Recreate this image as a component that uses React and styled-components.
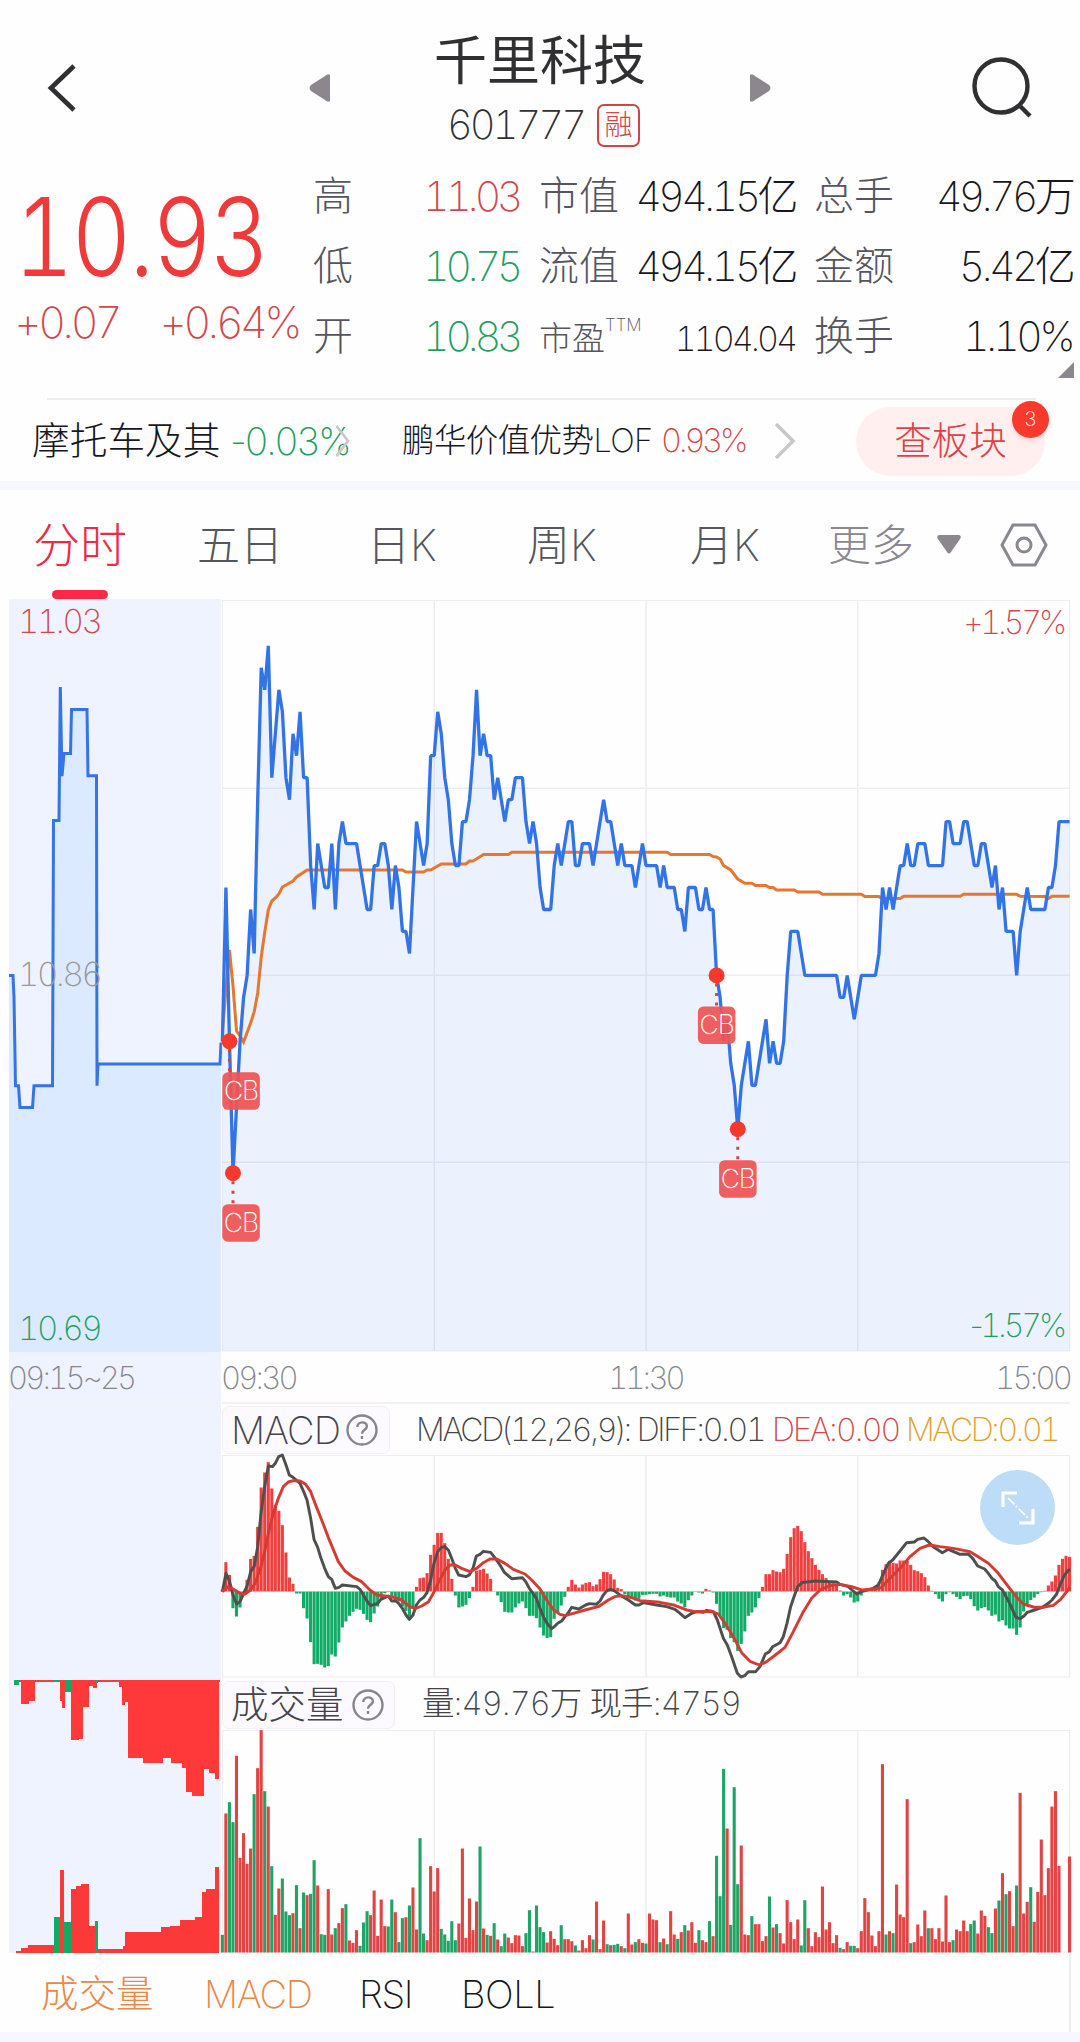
import React from "react";
import styled, { createGlobalStyle } from "styled-components";

const RED = "#d0484a";
const GREEN = "#1f9f63";
const BAR_RED = "#f03f3f";
const BAR_GREEN = "#12ab66";

const Global = createGlobalStyle`
  * { box-sizing: border-box; }
  body { margin: 0; background: #fefefe; }
`;

/* ---------- data ---------- */
const STEP = 3.53;
const px = (i) => 0.4 + i * STEP;

const levels = [
  -3, 4, -3, -9, -6, -3, -1, 0, 3, 1, 8, 14, 13, 15, 9, 11, 13, 12, 9, 8, 11, 10, 12, 9, 9, 5, 3, 6, 5, 4,
  4, 6, 3, 6, 7, 6, 6, 6, 6, 5, 4, 3, 3, 5, 5, 6, 6, 5, 3, 5, 4, 2, 2, 1, 4, 7, 6, 5, 6, 10,
  10, 12, 11, 9, 8, 6, 5, 5, 7, 7, 8, 10, 13, 10, 11, 10, 10, 8, 9, 8, 7, 8, 8, 9, 9, 9, 7, 6, 7, 6,
  4, 3, 3, 3, 5, 6, 5, 6, 7, 7, 5, 5, 6, 6, 6, 5, 6, 7, 8, 7, 7, 6, 5, 6, 5, 5, 5, 4, 5, 6,
  5, 5, 5, 5, 4, 5, 4, 4, 4, 3, 3, 2, 4, 4, 4, 3, 3, 4, 3, 3, 0, -1, -3, -2, -4, -5, -7, -5, -4, -3,
  -5, -5, -4, -3, -2, -4, -3, -4, -4, -3, 0, 2, 2, 2, 1, 0, 0, 0, 0, 0, 0, 0, 0, 0, 0, -1, -1, 0, -1, -2,
  -1, 0, 0, 0, 0, 0, 1, 4, 3, 4, 3, 4, 5, 5, 6, 5, 5, 6, 6, 6, 5, 5, 5, 5, 5, 7, 7, 6, 6, 6,
  7, 7, 6, 5, 5, 6, 6, 5, 4, 5, 3, 4, 2, 2, 2, 0, 2, 3, 4, 3, 3, 3, 3, 3, 4, 4, 5, 7, 7, 7, 7,
];
const levelY = (l) => 376.4 - l * 21.97;

const average = [
  [0, 431], [2, 350], [3, 386], [4, 431], [5, 436], [6, 442], [8, 423], [9, 412], [10, 393], [11, 357], [12, 332],
  [13, 310], [14, 301], [15, 298], [16, 294], [17, 287], [20, 281], [21, 277], [24, 270], [51, 270], [52, 272],
  [57, 272], [58, 270], [59, 270], [62, 264], [69, 264], [70, 261], [71, 261], [74, 254.5], [81, 254.5], [82, 252.3],
  [126, 252.3], [127, 254.5], [138, 254.5], [139, 256.5], [140, 257], [141, 259], [142, 265.6], [144, 270],
  [146, 279], [148, 283.3], [150, 283.3], [151, 285.6], [154, 285.6], [155, 287.6], [156, 287.6], [157, 290],
  [162, 290], [163, 292], [169, 292], [170, 294.3], [181, 294.3], [182, 296.6], [186, 296.6], [187, 298.6],
  [192, 298.6], [193, 296.3], [209, 296.3], [210, 294.3], [225, 294.3], [226, 296.3], [233, 296.6], [234, 298.6],
  [235, 296.3], [240, 296.3],
];

const auctionLine =
  "0,376.5 4,376.5 5,398 6.5,486.7 9.5,486.7 11,508.5 23.5,508.5 25,486.7 43.5,486.7 44.5,221.500 50,221.500 51.3,88 53,177 55,154.600 61.5,154.600 62.5,110.600 78,110.600 79,176.700 87.5,176.700 88,486.700 89,465 211,465 212,443.500";

const macdBars = [
  5, 88, 50, -50, -75, -48, -10, 35, 98, 107, 194, 312, 357, 388, 309, 260, 242, 199, 117, 42, 23, -6, -6, -50, -81,
  -152, -218, -217, -220, -228, -224, -189, -195, -153, -108, -90, -73, -61, -52, -55, -67, -85, -92, -66, -45, -22,
  -5, -2, -17, -25, -30, -45, -58, -76, -50, 14, 40, 42, 55, 110, 140, 176, 176, 145, 98, 38, -12, -48, -45, -40,
  -20, 14, 62, 65, 68, 54, 38, 0, -12, -32, -61, -63, -63, -48, -36, -30, -50, -73, -73, -80, -108, -132, -140, -137,
  -82, -62, -42, -16, 14, 35, 21, 12, 21, 26, 28, 16, 21, 37, 59, 58, 52, 36, 11, 7, -8, -16, -22, -27, -22, -10,
  -10, -8, -7, -7, -15, -12, -16, -18, -18, -30, -36, -47, -26, -12, -1, -3, -6, 8, 3, -3, -37, -75, -110, -115,
  -140, -152, -178, -157, -120, -73, -63, -48, -20, 14, 52, 52, 64, 60, 58, 68, 113, 163, 190, 197, 181, 148, 121,
  100, 80, 65, 52, 40, 30, 25, 20, 3, -12, -8, -18, -33, -30, -12, -2, 2, 5, 8, 28, 65, 82, 92, 86, 84, 93, 93, 92,
  80, 64, 61, 55, 43, 18, 2, -8, -22, -30, -8, -2, -8, -16, -23, -14, -13, -23, -44, -57, -50, -47, -57, -73, -69,
  -90, -86, -102, -111, -111, -130, -108, -60, -38, -26, -18, -8, -2, 2, 18, 30, 48, 80, 98, 107, 104,
];

const diffLine =
  "22,605 33,550 44,575 54,615 65,642 75,635 86,610 96,588 107,545 118,528 128,470 138,370 149,290 160,228 172,230 181,220 191,200 202,195 213,225 223,255 234,262 255,280 266,305 276,330 287,385 297,448 308,472 318,505 329,535 340,560 350,568 361,595 372,592 382,585 425,590 435,598 445,615 456,633 467,647 488,640 498,628 520,618 530,633 541,632 551,640 562,655 573,675 583,688 594,675 604,645 615,630 626,622 636,608 647,570 657,520 668,485 679,472 689,470 700,480 710,505 721,535 731,555 753,560 763,555 774,535 784,498 795,493 805,484 827,487 837,500 848,515 858,530 869,548 890,566 922,563 932,575 943,595 954,610 964,625 975,655 985,680 996,700 1010,716 1017,711 1028,700 1040,693 1050,680 1060,668 1070,652 1091,657 1112,645 1123,641 1144,643 1155,633 1165,615 1176,602 1187,598 1197,602 1218,617 1240,630 1261,645 1272,645 1285,638 1325,645 1355,650 1380,658 1395,670 1410,683 1430,670 1445,665 1465,667 1475,661 1495,665 1507,690 1525,745 1537,765 1550,800 1567,850 1578,861 1589,857 1600,845 1622,845 1635,830 1651,792 1663,785 1673,770 1695,758 1705,740 1716,700 1727,650 1737,620 1748,590 1761,578 1801,573 1865,576 1875,583 1900,590 1911,600 1925,612 1939,605 1955,600 1975,595 1990,585 2002,558 2020,520 2033,510 2055,483 2075,458 2098,456 2108,448 2127,444 2140,455 2155,470 2182,488 2200,478 2235,493 2260,492 2275,508 2288,528 2309,537 2320,550 2331,565 2341,573 2350,590 2362,600 2384,640 2403,682 2415,686 2427,678 2437,667 2458,660 2480,653 2500,640 2511,630 2525,612 2535,585 2547,558 2560,540 2566,540";
const deaLine =
  "22,605 40,590 54,597 75,610 90,612 107,600 120,580 138,530 149,485 160,430 175,370 190,325 205,290 220,276 235,272 255,273 272,283 287,305 300,340 320,390 345,455 370,515 390,543 415,562 440,575 465,600 485,615 510,618 540,623 560,630 585,650 600,656 620,648 640,636 655,610 670,578 690,540 705,525 718,524 740,535 765,545 785,535 805,518 825,507 845,507 870,520 895,538 930,552 950,570 975,597 995,630 1015,658 1035,673 1050,677 1075,670 1110,660 1150,650 1180,630 1200,620 1220,617 1250,623 1275,632 1335,637 1375,645 1415,660 1440,665 1490,664 1510,672 1530,700 1555,740 1580,788 1605,814 1633,825 1655,815 1685,792 1710,772 1735,725 1765,665 1790,625 1815,600 1845,587 1875,583 1910,590 1940,600 1975,598 2000,592 2020,570 2055,535 2085,500 2115,475 2143,465 2175,470 2215,475 2265,485 2285,497 2320,520 2350,550 2380,590 2405,622 2425,642 2455,651 2485,652 2515,646 2537,628 2565,592";

const volumes = [
  -53, 417, -451, -391, 590, 284, 358, 266, 312, -475, 553, 667, -484, 438, -259, 113, 192, -222, -123, -112, 118,
  -202, 73, -180, 172, -176, -277, 201, -55, -53, 190, 54, -73, 88, 133, -145, 36, 29, 67, -20, -90, -124, 112, 186,
  50, 159, 79, -78, -159, 121, -31, -103, 106, -141, 195, 69, -343, -57, 37, 259, 183, 253, -71, -54, -35, -94, -37,
  87, 312, 44, 162, 67, 153, -318, 72, -53, 50, -88, 39, -19, -57, 45, 28, 52, 51, 19, -58, -127, 3, -141, -76, -61,
  30, 64, 41, 22, -82, 40, 40, 34, -21, 6, 37, 13, 52, -39, 153, 10, 96, -25, 22, -23, -26, 19, -13, 117, 24, -31,
  40, 29, -27, 117, 99, 97, -31, 42, -25, 124, 54, -41, 61, -82, 66, 91, 29, -67, 37, 31, -94, 49, -290, -169, -551,
  372, -83, -496, -205, 321, 54, 52, -109, 85, 85, 34, 49, -168, 75, -85, 58, 27, 157, 91, 40, 99, -21, -157, 73, 19,
  61, 46, 198, 69, 91, 28, 52, -14, 10, 31, -20, -20, 13, 64, 163, 121, 51, 19, 64, 565, -54, 64, -58, 204, 114, 106,
  460, -28, 31, 84, 49, 126, -73, 73, 40, 73, 33, 171, 31, -37, 69, 64, 96, 64, -85, -96, 57, 126, 110, -76, -58,
  132, -156, 238, -175, 184, 79, -201, 479, 117, 152, -196, 92, 182, 339, 172, 253, 438, 484, 260, 0, 0, 288,
];

/* [start, end, size, isGreen] in thirds of a pixel */
const unmatched = [
  [42, 56, 15, 1], [63, 87, 73], [87, 105, 64], [160, 193, 6, 1], [180, 186, 64], [186, 195, 84], [195, 213, 37, 1],
  [213, 236, 181], [236, 248, 176], [248, 266, 80], [266, 278, 18], [278, 291, 25], [284, 294, 9, 1], [358, 366, 20],
  [366, 375, 75], [375, 383, 66], [383, 428, 235], [428, 488, 248], [488, 514, 235], [514, 547, 248],
  [547, 558, 265], [558, 575, 335], [575, 611, 349], [611, 627, 268], [627, 645, 280], [645, 657, 298],
];
const matched = [
  [48, 62, 6], [62, 84, 15], [84, 162, 25], [162, 180, 107, 1], [180, 192, 248], [192, 213, 92, 1], [213, 228, 193],
  [228, 242, 200], [242, 266, 208], [266, 285, 82], [285, 294, 97, 1], [294, 368, 13], [368, 375, 22],
  [375, 482, 62], [482, 510, 77], [510, 539, 81], [539, 585, 99], [585, 606, 107], [606, 618, 183], [618, 646, 192],
  [646, 657, 257],
];

/* ---------- parts ---------- */
const Page = styled.div`
  width: 1080px;
  height: 2042px;
  overflow: hidden;
  background: #fefefe;
  color: #17171d;
  font-family: Inter, "Noto Sans CJK SC", sans-serif;
  font-weight: 200;
  line-height: 1;
  white-space: nowrap;
`;
/* digits keep equal widths while the punctuation between them stays narrow */
const Digits = styled.span`
  font-variant-numeric: tabular-nums;
`;
const Figures = ({ children }) =>
  children.split(/(\d+)/).map((part, i) => (i % 2 ? <Digits key={i}>{part}</Digits> : part));

const Text = styled.span`
  flex: none;
  width: ${(p) => (p.$width ? `${p.$width}px` : "auto")};
  font-size: ${(p) => p.$size}px;
  letter-spacing: ${(p) => p.$track || 0}px;
  color: ${(p) => p.$color || "inherit"};
`;

const Header = styled.header`
  height: 161px;
  display: grid;
  grid-template-columns: 309px 1fr 309px;
  align-items: center;
  padding: 14px 0 0;
`;
const HeaderSide = styled.div`
  height: 148px;
  display: flex;
  justify-content: space-between;
  align-items: center;
  padding: ${(p) => (p.$right ? "0 47px 0 0" : "0 0 0 46px")};
`;
const Title = styled.div`
  display: flex;
  flex-direction: column;
  align-items: center;
  padding-top: 5px;
`;
const Name = styled.h1`
  margin: 0;
  font-size: 53px;
  line-height: 53px;
  font-weight: 400;
  color: #303033;
`;
const CodeRow = styled.div`
  display: flex;
  align-items: center;
  gap: 13px;
  margin-top: 16px;
  padding-left: 7px;
  color: #303033;
`;
const MarginTag = styled.span`
  width: 43px;
  height: 43px;
  display: flex;
  align-items: center;
  justify-content: center;
  border: 2.5px solid #d04648;
  border-radius: 7px;
  color: #d04648;
  font-size: 28px;
`;

const Quote = styled.section`
  height: 237px;
  display: flex;
`;
const PriceBlock = styled.div`
  width: 313px;
  padding: 21px 0 0 14px;
`;
const Price = styled.div`
  width: 300px;
  font-size: 108px;
  line-height: 110px;
  letter-spacing: -3px;
  font-weight: 300;
  color: #f03a3a;
  transform: scaleX(0.858);
  transform-origin: left;
`;
const Change = styled.div`
  display: flex;
  justify-content: space-between;
  width: 285px;
  margin-top: 8px;
  font-size: 43px;
  line-height: 44px;
  letter-spacing: -3.6px;
  color: ${RED};
`;
const StatColumn = styled.div`
  width: ${(p) => p.$width}px;
  margin-right: ${(p) => p.$gap || 0}px;
`;
const Stat = styled.div`
  height: 70px;
  padding-top: ${(p) => (p.$small ? 5 : 0)}px;
  display: flex;
  align-items: center;
  justify-content: space-between;
`;
const StatLabel = styled.span`
  font-size: ${(p) => (p.$small ? 33 : 40)}px;
  color: #55555d;
`;
const Sup = styled.sup`
  font-size: 17px;
  vertical-align: 19px;
  line-height: 0;
`;
const StatValue = styled.span`
  font-size: ${(p) => (p.$small ? 34 : 41)}px;
  letter-spacing: ${(p) => p.$track}px;
  color: ${(p) => p.$color || "#17171d"};
`;
const CornerRow = styled.div`
  display: flex;
  justify-content: flex-end;
  margin: -9px -2px 0 0;
`;

const Related = styled.section`
  height: 81px;
  padding: 1px 0 0 32px;
  display: flex;
  align-items: center;
`;
const Rule = styled.div`
  height: 2px;
  margin: 0 44px 0 47px;
  background: #eee;
`;
const Pill = styled.div`
  position: relative;
  width: 189px;
  height: 69px;
  display: flex;
  align-items: center;
  justify-content: center;
  border-radius: 35px;
  background: #ffefef;
  color: #dd4247;
  font-size: 37.5px;
`;
const Badge = styled.span`
  position: absolute;
  top: -6px;
  right: -4px;
  width: 37px;
  height: 37px;
  border-radius: 50%;
  background: #f9392b;
  box-shadow: 0 3px 5px #f9392b22;
  color: #fff;
  font-size: 20px;
  display: flex;
  align-items: center;
  justify-content: center;
`;
const Band = styled.div`
  height: ${(p) => p.$h}px;
  background: #f6f7ff;
`;

const Tabs = styled.nav`
  height: 109px;
  display: flex;
  align-items: center;
  padding: 0 0 0 33px;
  color: #55555d;
`;
const Tab = styled.div`
  width: ${(p) => p.$width}px;
  padding-top: 2px;
  color: ${(p) => p.$color || "inherit"};
  font-size: ${(p) => p.$size || 43}px;
`;
const ActiveTab = styled(Tab)`
  height: 109px;
  display: flex;
  flex-direction: column;
  justify-content: space-between;
  padding-top: 31px;
  &::after {
    content: "";
    width: 56px;
    height: 9px;
    margin-left: 19px;
    border-radius: 4.5px;
    background: #ff2945;
  }
`;

const Charts = styled.main`
  display: flex;
  gap: 1px;
  padding-left: 9px;
  height: 1354px;
`;
const AuctionColumn = styled.div`
  width: 212px;
  background: #eef3ff;
`;
const MainColumn = styled.div`
  width: 850px;
`;
const Plot = styled.div`
  position: relative;
  height: ${(p) => p.$h}px;
  svg { display: block; overflow: visible; }
`;
const AxisLabel = styled.span`
  position: absolute;
  left: ${(p) => (p.$right ? "auto" : "9px")};
  right: ${(p) => (p.$right ? "8px" : "auto")};
  top: ${(p) => p.$top}px;
  font-size: ${(p) => (p.$right ? 32 : 33)}px;
  letter-spacing: ${(p) => (p.$right ? -3.2 : -2.4)}px;
  color: ${(p) => p.$color};
`;
const TimeAxis = styled.div`
  height: 50px;
  display: flex;
  align-items: center;
  justify-content: space-between;
  width: ${(p) => p.$width || 849}px;
  margin-left: -1px;
  color: #85858b;
  font-size: 31px;
  letter-spacing: -2.8px;
`;
const IndicatorBar = styled.div`
  height: ${(p) => p.$h}px;
  width: ${(p) => p.$width || 848}px;
  padding-top: 1px;
  display: flex;
  align-items: center;
  border-top: ${(p) => (p.$line ? "2px solid #f4f0f4" : "0")};
  color: #444448;
`;
const IndicatorName = styled.div`
  width: ${(p) => p.$width}px;
  height: 48px;
  display: flex;
  align-items: center;
  padding-left: 8px;
  border: 1px solid #f3eef5;
  border-radius: 7px;
  background: #fdfaff;
  margin-right: ${(p) => p.$gap}px;
`;
const Expand = styled.button`
  position: absolute;
  left: 758px;
  top: 15px;
  width: 75px;
  height: 75px;
  padding: 0;
  border: 0;
  border-radius: 50%;
  background: #bcdcf7;
  display: flex;
  align-items: center;
  justify-content: center;
`;
const Footer = styled.footer`
  height: 79px;
  width: 1071px;
  border-right: 2px solid #eee;
  display: flex;
  align-items: center;
  padding: 3px 0 0 41px;
`;

/* ---------- drawings ---------- */
const ChevronBox = styled.svg`
  flex: none;
  width: ${(p) => p.$width || 22}px;
  height: ${(p) => p.$height || 38}px;
  margin-left: ${(p) => p.$before}px;
  margin-right: ${(p) => p.$after}px;
`;
const Chevron = (props) => (
  <ChevronBox viewBox="0 0 22 38" preserveAspectRatio="none" {...props}>
    <path d="M2 2 19 19 2 36" fill="none" stroke="#c8c8c8" strokeWidth="3.5" />
  </ChevronBox>
);
const Help = () => (
  <svg width="32" height="32" viewBox="0 0 32 32" fill="none" stroke="#85858d" strokeWidth="2.4">
    <circle cx="16" cy="16" r="14.5" />
    <path d="M11.300 13c0-6 9.600-6 9.600-.8 0 3.600-4.900 3.400-4.900 7.500" />
    <path d="M16 22v3" />
  </svg>
);
const Grid = ({ h }) => (
  <g stroke="#eeedf1" fill="none">
    <path d={`M.5 .5H847.700V${h}H.5Z`} strokeWidth="1.200" />
    <path d={`M212.200 0V${h}M424.100 0V${h}M635.800 0V${h}`} strokeWidth="1.600" />
  </g>
);
const Signal = ({ i, level, shift = 0 }) => {
  const x = px(i);
  const y = levelY(level);
  return (
    <g>
      <path d={`M${x} ${y + 8}V${y + 32}`} stroke="#d0454a" strokeWidth="3" strokeDasharray="3 6.500" />
      <circle cx={x} cy={y} r="8" fill="#f6392c" />
      <rect x={x - 18.700 + shift} y={y + 31} width="37.500" height="37.500" rx="5.500" fill="#f05453" fillOpacity=".93" />
      <text x={x + shift} y={y + 59} textAnchor="middle" fontSize="26.500" letterSpacing="-1" fill="#fff">CB</text>
    </g>
  );
};

function PriceChart() {
  const line = levels.map((l, i) => `${px(i)},${levelY(l)}`).join(" ");
  return (
    <svg width="850" height="753">
      <g stroke="#eeedf1" fill="none">
        <path d="M.5 1.500H847.700V752H.5Z" strokeWidth="1.200" />
        <path d="M212.200 1V752M424.100 1V752M635.800 1V752M0 189.300H848M0 376.300H848M0 563.300H848" strokeWidth="1.600" />
      </g>
      <polygon points={`${px(0)},752 ${line} ${px(240)},752`} fill="#4f7dff" fillOpacity=".1" />
      <polyline points={average.map(([i, y]) => `${px(i)},${y + 1}`).join(" ")} fill="none" stroke="#e47831" strokeWidth="3" />
      <polyline points={line} fill="none" stroke="#3273e8" strokeWidth="3.300" strokeLinejoin="bevel" />
      <Signal i={2} level={-3} shift={11.600} />
      <Signal i={3} level={-9} shift={8} />
      <Signal i={140} level={0} />
      <Signal i={146} level={-7} />
    </svg>
  );
}

function MacdChart() {
  return (
    <svg width="850" height="223">
      <Grid h={222} />
      {macdBars.map((v, i) => (
        <rect key={i} x={px(i) - 1.600} width="3.100" y={136.500 - Math.max(v, 0) / 3} height={Math.abs(v) / 3} fill={v > 0 ? BAR_RED : BAR_GREEN} />
      ))}
      <path d="M0 136.500H848" stroke="#d7a9a5" strokeWidth=".5" />
      <g transform="translate(-7 -65) scale(.33333)" fill="none" strokeWidth="8.800" strokeLinejoin="round">
        <polyline points={diffLine} stroke="#4e504e" />
        <polyline points={deaLine} stroke="#d63b32" />
      </g>
    </svg>
  );
}

function VolumeChart() {
  return (
    <svg width="850" height="223">
      <Grid h={222} />
      {volumes.map((v, i) => (
        <rect key={i} x={px(i) - 1.600} width="3.100" y={222.500 - Math.abs(v) / 3} height={Math.abs(v) / 3} fill={v > 0 ? "#e24444" : "#1fa467"} />
      ))}
    </svg>
  );
}

function AuctionVolume() {
  return (
    <svg width="212" height="273" shapeRendering="crispEdges">
      <rect x="5" y="0" width="206" height="2" fill="#fb3939" />
      {unmatched.map(([a, b, s, g]) => (
        <rect key={`u${a}`} x={a / 3 - 9} width={(b - a) / 3} y="0" height={s / 3} fill={g ? BAR_GREEN : "#ff3939"} />
      ))}
      {matched.map(([a, b, s, g]) => (
        <rect key={`m${a}`} x={a / 3 - 9} width={(b - a) / 3} y={273 - s / 3} height={s / 3} fill={g ? BAR_GREEN : "#fb3939"} />
      ))}
    </svg>
  );
}

const stats = [
  { width: 206, gap: 20, track: -4.3, rows: [["高", "11.03", RED], ["低", "10.75", GREEN], ["开", "10.83", GREEN]] },
  { width: 256, gap: 19, track: -3.6, rows: [["市值", "494.15亿"], ["流值", "494.15亿"], ["市盈", "1104.04", null, "TTM"]] },
  { width: 258, track: -3.7, rows: [["总手", "49.76万"], ["金额", "5.42亿"], ["换手", "1.10%"]] },
];

export default function App() {
  return (
    <Page>
      <Global />
      <Header>
        <HeaderSide>
          <svg width="30" height="48" viewBox="0 0 30 48" fill="none" stroke="#303033" strokeWidth="4.700">
            <path d="M28 2 5 24 28 46" />
          </svg>
          <svg width="24" height="30" viewBox="0 0 24 30" style={{ marginRight: -23 }}>
            <path d="M22 2v26Q20 30 17 27L3 18Q0 15 3 12L17 3Q20 0 22 2Z" fill="#8c868e" />
          </svg>
        </HeaderSide>
        <Title>
          <Name>千里科技</Name>
          <CodeRow>
            <Text $size={40} $track={-3}><Figures>601777</Figures></Text>
            <MarginTag>融</MarginTag>
          </CodeRow>
        </Title>
        <HeaderSide $right>
          <svg width="24" height="30" viewBox="0 0 24 30" style={{ marginLeft: -23 }}>
            <path d="M2 2v26Q4 30 7 27L21 18Q24 15 21 12L7 3Q4 0 2 2Z" fill="#8c868e" />
          </svg>
          <svg width="62" height="62" viewBox="0 0 62 62" fill="none" stroke="#303033" strokeWidth="4.400">
            <circle cx="30" cy="29" r="26.500" />
            <path d="M48 48 59 59" />
          </svg>
        </HeaderSide>
      </Header>

      <Quote>
        <PriceBlock>
          <Price><Figures>10.93</Figures></Price>
          <Change>
            <span><Figures>+0.07</Figures></span>
            <span><Figures>+0.64%</Figures></span>
          </Change>
        </PriceBlock>
        {stats.map((col, c) => (
          <StatColumn key={c} $width={col.width} $gap={col.gap}>
            {col.rows.map(([label, value, color, sup]) => (
              <Stat key={label} $small={!!sup}>
                <StatLabel $small={!!sup}>{label}{sup && <Sup>{sup}</Sup>}</StatLabel>
                <StatValue $small={!!sup} $track={sup ? -3 : col.track} $color={color}><Figures>{value}</Figures></StatValue>
              </Stat>
            ))}
            {c === 2 && (
              <CornerRow>
                <svg width="16" height="16"><path d="M16 0V16H0Z" fill="#8c868e" /></svg>
              </CornerRow>
            )}
          </StatColumn>
        ))}
      </Quote>
      <Rule />
      <Related>
        <Text $size={37.700} $width={198}>摩托车及其</Text>
        <Text $size={38} $track={-2.600} $width={119} $color={GREEN}><Figures>-0.03%</Figures></Text>
        <Chevron $width={15} $height={34} $before={-14} $after={52} />
        <Text $size={32.500} $track={-0.600} $width={259}>鹏华价值优势LOF</Text>
        <Text $size={32.500} $track={-3.300} $width={86} $color={RED}><Figures>0.93%</Figures></Text>
        <Chevron $before={27} $after={60} />
        <Pill>查板块<Badge>3</Badge></Pill>
      </Related>
      <Band $h={9} />
      <Tabs>
        <ActiveTab $width={164} $size={47} $color="#e92c48">分时</ActiveTab>
        <Tab $width={170}>五日</Tab>
        <Tab $width={160}>日K</Tab>
        <Tab $width={163}>周K</Tab>
        <Tab $width={138}>月K</Tab>
        <Tab $width={109} $color="#8c878f">更多</Tab>
        <svg width="24" height="19" viewBox="0 0 24 19">
          <path d="M2 0H22Q25 1 23 4L14 17Q12 20 10 17L1 4Q-1 1 2 0Z" fill="#8c868e" />
        </svg>
        <svg width="48" height="44" viewBox="0 0 48 44" fill="none" stroke="#8c868e" strokeWidth="3" style={{ marginLeft: 39 }}>
          <path d="M13 2H35L46 22 35 42H13L2 22Z" strokeLinejoin="round" />
          <circle cx="24" cy="22" r="7" />
        </svg>
      </Tabs>

      <Charts>
        <AuctionColumn>
          <Plot $h={753}>
            <svg width="212" height="753">
              <polygon points={`0,753 ${auctionLine} 212,753`} fill="#dceaff" />
              <polyline points={auctionLine} fill="none" stroke="#3474e4" strokeWidth="3" />
            </svg>
            <AxisLabel $top={6} $color={RED}><Figures>11.03</Figures></AxisLabel>
            <AxisLabel $top={359} $color="#999"><Figures>10.86</Figures></AxisLabel>
            <AxisLabel $top={713} $color={GREEN}><Figures>10.69</Figures></AxisLabel>
          </Plot>
          <TimeAxis $width={212}><span><Figures>09:15~25</Figures></span></TimeAxis>
          <IndicatorBar $h={278} $width={212} $line />
          <AuctionVolume />
        </AuctionColumn>
        <MainColumn>
          <Plot $h={753}>
            <PriceChart />
            <AxisLabel $right $top={8} $color={RED}><Figures>+1.57%</Figures></AxisLabel>
            <AxisLabel $right $top={711} $color={GREEN}><Figures>-1.57%</Figures></AxisLabel>
          </Plot>
          <TimeAxis>
            <span><Figures>09:30</Figures></span>
            <span><Figures>11:30</Figures></span>
            <span><Figures>15:00</Figures></span>
          </TimeAxis>
          <IndicatorBar $h={53} $line>
            <IndicatorName $width={168} $gap={26}>
              <Text $size={38} $track={-1} $width={115}>MACD</Text><Help />
            </IndicatorName>
            <Text $size={32} $track={-2.300} $width={356}><Figures>MACD(12,26,9): DIFF:0.01</Figures></Text>
            <Text $size={32} $track={-1.900} $width={134}  $color={RED}><Figures>DEA:0.00</Figures></Text>
            <Text $size={32} $track={-2.500} $color="#e0a02c"><Figures>MACD:0.01</Figures></Text>
          </IndicatorBar>
          <Plot $h={223}>
            <MacdChart />
            <Expand>
              <svg width="34" height="34" viewBox="0 0 34 34" fill="none" stroke="#fff" strokeWidth="3.200">
                <path d="M2 16V2H16M18 32H32V18" />
                <path d="M7 7 27 27" strokeWidth="1.600" strokeDasharray="9 2 2 2" />
              </svg>
            </Expand>
          </Plot>
          <IndicatorBar $h={52}>
            <IndicatorName $width={173} $gap={27}>
              <Text $size={37.500} $width={121}>成交量</Text><Help />
            </IndicatorName>
            <Text $size={32.500} $track={-0.950}><Figures>量:49.76万 现手:4759</Figures></Text>
          </IndicatorBar>
          <Plot $h={223}><VolumeChart /></Plot>
        </MainColumn>
      </Charts>
      <Footer>
        <Text $size={37.500} $width={163} $color="#e8894a">成交量</Text>
        <Text $size={38} $track={-1.300} $width={155} $color="#e8894a">MACD</Text>
        <Text $size={38} $track={-1.300} $width={102}>RSI</Text>
        <Text $size={38} $track={-0.400}>BOLL</Text>
      </Footer>
      <Band $h={12} />
    </Page>
  );
}
